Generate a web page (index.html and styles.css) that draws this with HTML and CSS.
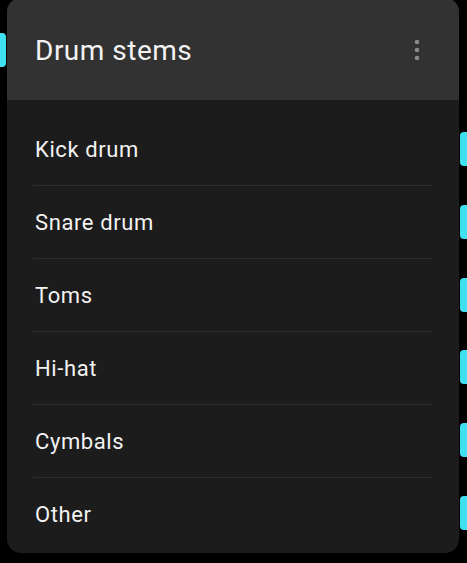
FILE: index.html
```html
<!DOCTYPE html>
<html lang="en">
    <head>
        <meta charset="UTF-8">
        <title>Drum stems</title>
        <link rel="stylesheet" href="styles.css">
    </head>
    <body>
        <div class="track-bar track-left"></div>
        <div class="track-bar track-right" style="top: 132px"></div>
        <div class="track-bar track-right" style="top: 205px"></div>
        <div class="track-bar track-right" style="top: 278px"></div>
        <div class="track-bar track-right" style="top: 350px"></div>
        <div class="track-bar track-right" style="top: 423px"></div>
        <div class="track-bar track-right" style="top: 496px"></div>

        <div class="sheet">
            <div class="sheet-head">
                <span class="sheet-title">Drum stems</span>
                <svg class="more" width="6" height="22" viewBox="0 0 6 22">
                    <circle cx="3" cy="3" r="2.3" fill="#8a8a8a"/>
                    <circle cx="3" cy="11" r="2.3" fill="#8a8a8a"/>
                    <circle cx="3" cy="19" r="2.3" fill="#8a8a8a"/>
                </svg>
            </div>
            <ul class="stem-list">
                <li class="stem">Kick drum</li>
                <li class="stem">Snare drum</li>
                <li class="stem">Toms</li>
                <li class="stem">Hi-hat</li>
                <li class="stem">Cymbals</li>
                <li class="stem">Other</li>
            </ul>
        </div>
    </body>
</html>
```

FILE: styles.css
```css
html, body{margin: 0; padding: 0; background: #000;}
body{
    width: 467px;
    height: 563px;
    overflow: hidden;
    position: relative;
    font-family: Roboto, "Liberation Sans", sans-serif;
    color: #f2f2f2;
}
.track-bar{
    position: absolute;
    width: 10px;
    height: 34px;
    background: #3fe0f0;
    border-radius: 4px;
}
.track-left{
    left: -4px;
    top: 33px;
}
.track-right{
    left: 460px;
}
.sheet{
    position: relative;
    margin: -2px 0 0 7px;
    width: 452px;
    height: 555px;
    background: #1c1c1c;
    border-radius: 14px;
    overflow: hidden;
}
.sheet-head{
    height: 102px;
    background: #323232;
    display: flex;
    align-items: center;
    justify-content: space-between;
    padding: 2px 39px 0 28px;
    box-sizing: border-box;
}
.sheet-title{
    font-size: 28px;
    letter-spacing: 0.5px;
}
.more{
    display: block;
}
.stem-list{
    list-style: none;
    margin: 0;
    padding: 13px 27px 0 26px;
}
.stem{
    height: 73px;
    display: flex;
    align-items: center;
    padding-left: 2px;
    font-size: 22px;
    letter-spacing: 0.6px;
    box-sizing: border-box;
    border-bottom: 1px solid #2c2c2c;
}
.stem:last-child{
    border-bottom: none;
}
```
